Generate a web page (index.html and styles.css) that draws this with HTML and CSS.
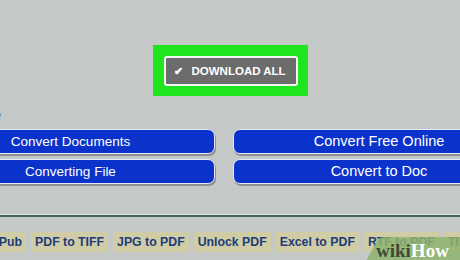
FILE: index.html
```html
<!DOCTYPE html>
<html>
<head>
  <title>Convert Documents</title>
  <link rel="stylesheet" href="styles.css">
</head>
<body>
  <div class="page">
    <div class="download-area">
      <div class="highlight">
        <button class="download-btn"><span class="check">&#10004;</span> DOWNLOAD ALL</button>
      </div>
    </div>

    <div class="label">Type</div>

    <!-- Convert buttons -->
    <div class="convert-grid">
      <div class="convert-btn left">Convert Documents</div>
      <div class="convert-btn right">Convert Free Online</div>
      <div class="convert-btn left">Converting File</div>
      <div class="convert-btn right">Convert to Doc</div>
    </div>

    <div class="divider"></div>

    <!-- Tools row -->
    <div class="tools">
      <a class="tool">ePub</a>
      <a class="tool">PDF to TIFF</a>
      <a class="tool">JPG to PDF</a>
      <a class="tool">Unlock PDF</a>
      <a class="tool">Excel to PDF</a>
      <a class="tool">RTF to PDF</a>
      <a class="tool">TIFF</a>
    </div>

    <div class="wikihow">
      <svg width="96" height="24" viewBox="0 0 96 24">
        <path d="M12 2 Q14 0 19 0 L92 0 Q96 0 96 4 L96 24 L0 24 Z" fill="#8fb36e" fill-opacity="0.85"/>
      </svg>
      <span class="wiki">wiki</span><span class="how">How</span>
    </div>
  </div>
</body>
</html>
```

FILE: styles.css
```css
body {
  margin: 0;
  background-color: #c4c9c8;
  font-family: "Liberation Sans", Arial, sans-serif;
}

.page {
  position: relative;
  width: 460px;
  height: 260px;
  overflow: hidden;
}

.download-area {
  display: flex;
  justify-content: center;
  padding-top: 45px;
}

.highlight {
  background-color: #1ee51e;
  padding: 11px 10px 10px 11px;
}

.download-btn {
  display: flex;
  align-items: center;
  width: 134px;
  height: 30px;
  padding: 0 0 0 8px;
  background-color: #6c6c6c;
  border: 2px solid #f4f4f4;
  border-radius: 3px;
  color: #ffffff;
  font-family: "Liberation Sans", Arial, sans-serif;
  font-size: 11.5px;
  font-weight: bold;
}

.check {
  font-size: 11px;
  margin-right: 9px;
}

.label {
  margin-left: -25px;
  margin-top: 12px;
  height: 16px;
  font-size: 12px;
  color: #333;
}

.convert-grid {
  display: grid;
  grid-template-columns: 289px 292px;
  column-gap: 18px;
  row-gap: 5px;
  margin-left: -74px;
  margin-top: 5px;
}

.convert-btn {
  height: 23px;
  background-color: #0b33cb;
  border: 1px solid #e6e8f2;
  border-radius: 7px;
  box-shadow: 1px 2px 0 #8c9090;
  color: #ffffff;
  font-size: 13.5px;
  line-height: 23px;
  text-align: center;
}

.convert-btn.right {
  font-size: 14.5px;
}

.divider {
  margin-top: 30px;
  height: 2px;
  background-color: #3f6260;
  border-top: 1px solid #e0e8e8;
}

.tools {
  display: flex;
  gap: 5px;
  margin-top: 15px;
  margin-left: -12px;
}

.tool {
  padding: 3px 4px;
  background-color: #d0cca6;
  color: #1c3d7a;
  font-size: 12.3px;
  font-weight: bold;
  white-space: nowrap;
}

.wikihow {
  position: absolute;
  left: 366px;
  top: 237px;
  width: 96px;
  height: 24px;
}

.wikihow svg {
  position: absolute;
  left: 0;
  top: 0;
}

.wiki,
.how {
  position: relative;
  top: 3px;
  font-family: "Liberation Serif", "Times New Roman", serif;
  font-size: 19px;
  font-weight: bold;
}

.wiki {
  margin-left: 10px;
  color: #3e4a35;
}

.how {
  color: #ffffff;
}
```
